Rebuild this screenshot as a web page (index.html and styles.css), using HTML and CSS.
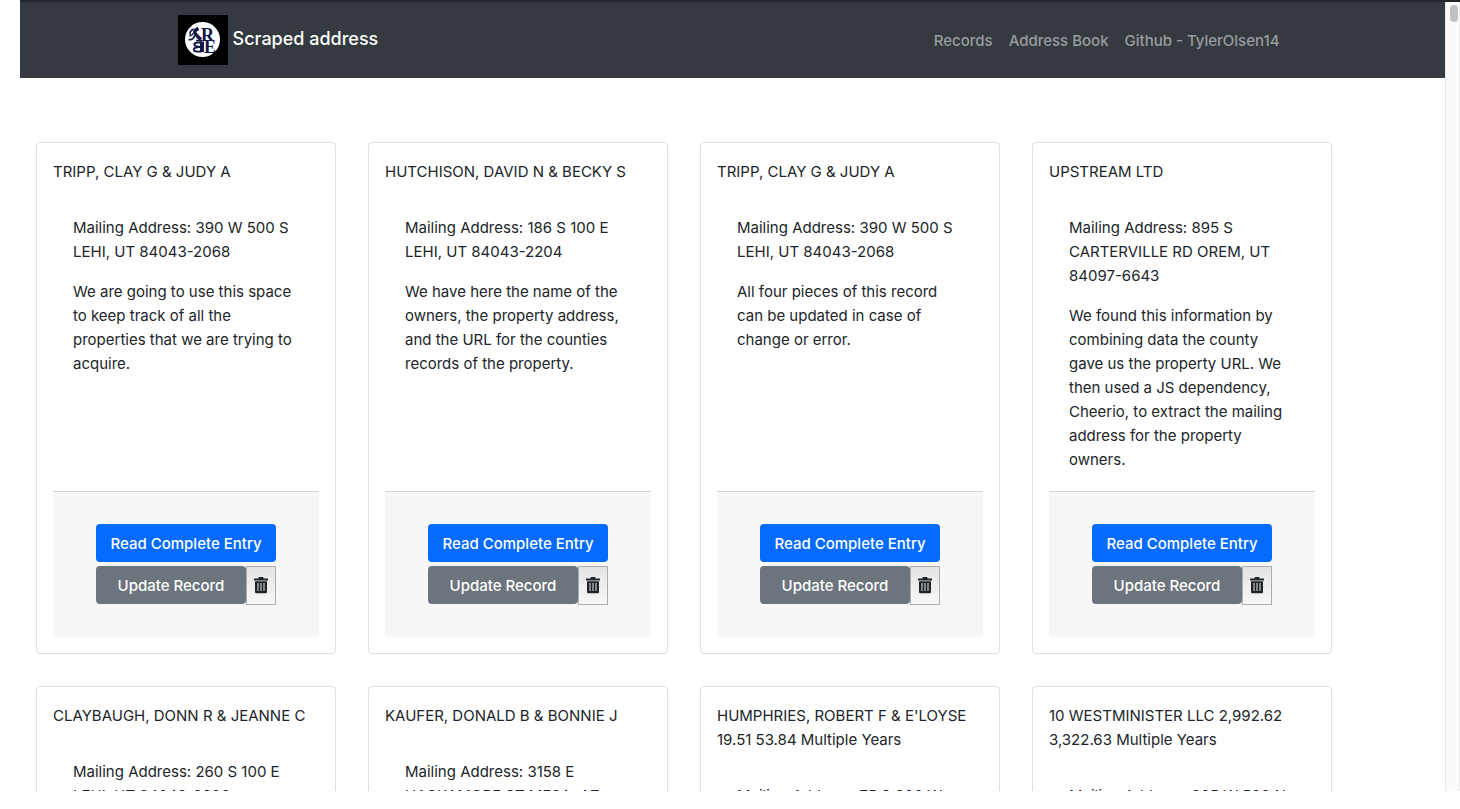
FILE: index.html
```
<!DOCTYPE html>
<html lang="en">
<head>
<meta charset="utf-8">
<title>Scraped address</title>
<link rel="stylesheet" href="styles.css">
</head>
<body>
<svg class="sprite" aria-hidden="true">
  <symbol id="trash" viewBox="0 0 14 17">
    <path fill="#212529" d="M0 1.5h4.500V.8Q4.500 0 5.300 0h3.400Q9.500 0 9.500.8v.7H14V3.500H0zM1 4.300h12V15q0 1.300-1.300 1.300H2.300Q1 16.300 1 15z"/>
    <path stroke="#a3a3a3" stroke-width="1.500" d="M4 6v8M7 6v8M10 6v8"/>
  </symbol>
</svg>
<div class="window">
  <div class="page">
    <header class="navbar">
      <div class="container">
        <a class="brand" href="#">
          <svg class="logo" viewBox="0 0 50 50" aria-hidden="true">
            <rect width="50" height="50" fill="#000"/>
            <circle cx="24.500" cy="24.500" r="17.500" fill="#fff"/>
            <g fill="none" stroke="#12164a">
              <path stroke-width="3.500" d="M20.500 13.500Q15 15.500 17.500 19T23 24.500"/>
              <path stroke-width="1.500" d="M15.500 14q-4 2-3.500 5.500M10.500 24.500q5 1 6-4M11.500 21q3-1 4-3M18 25.500h6"/>
              <path stroke-width="4" d="M24 26.500v10.500"/>
              <path stroke-width="2" d="M24 27.500h-4.500q-4 .5-3 2.500t6 2M22 32q-7 0-6 3.500 1 1.500 8 1"/>
            </g>
            <g class="monogram" fill="#12164a">
              <text x="23" y="25.500">R</text>
              <text x="26" y="38">E</text>
            </g>
          </svg>
          <span class="brand-name">Scraped address</span>
        </a>
        <nav class="links">
          <a href="#">Records</a>
          <a href="#">Address Book</a>
          <a href="#">Github - TylerOlsen14</a>
        </nav>
      </div>
    </header>
    <main class="cards">
      <article class="card">
        <h2 class="title">TRIPP, CLAY G &amp; JUDY A</h2>
        <div class="body"><p>Mailing Address: 390 W 500 S LEHI, UT 84043-2068</p><p>We are going to use this space to keep track of all the properties that we are trying to acquire.</p></div>
        <footer class="actions"><div class="buttons"><button class="btn read">Read Complete Entry</button><button class="btn update">Update Record</button><button class="delete" aria-label="Delete record"><svg class="trash"><use href="#trash"/></svg></button></div></footer>
      </article>
      <article class="card">
        <h2 class="title">HUTCHISON, DAVID N &amp; BECKY S</h2>
        <div class="body"><p>Mailing Address: 186 S 100 E LEHI, UT 84043-2204</p><p>We have here the name of the owners, the property address, and the URL for the counties records of the property.</p></div>
        <footer class="actions"><div class="buttons"><button class="btn read">Read Complete Entry</button><button class="btn update">Update Record</button><button class="delete" aria-label="Delete record"><svg class="trash"><use href="#trash"/></svg></button></div></footer>
      </article>
      <article class="card">
        <h2 class="title">TRIPP, CLAY G &amp; JUDY A</h2>
        <div class="body"><p>Mailing Address: 390 W 500 S LEHI, UT 84043-2068</p><p>All four pieces of this record can be updated in case of change or error.</p></div>
        <footer class="actions"><div class="buttons"><button class="btn read">Read Complete Entry</button><button class="btn update">Update Record</button><button class="delete" aria-label="Delete record"><svg class="trash"><use href="#trash"/></svg></button></div></footer>
      </article>
      <article class="card">
        <h2 class="title">UPSTREAM LTD</h2>
        <div class="body"><p>Mailing Address: 895 S CARTERVILLE RD OREM, UT 84097-6643</p><p>We found this information by combining data the county gave us the property URL. We then used a JS dependency, Cheerio, to extract the mailing address for the property owners.</p></div>
        <footer class="actions"><div class="buttons"><button class="btn read">Read Complete Entry</button><button class="btn update">Update Record</button><button class="delete" aria-label="Delete record"><svg class="trash"><use href="#trash"/></svg></button></div></footer>
      </article>
      <article class="card">
        <h2 class="title">CLAYBAUGH, DONN R &amp; JEANNE C</h2>
        <div class="body"><p>Mailing Address: 260 S 100 E LEHI, UT 84043-2206</p></div>
      </article>
      <article class="card">
        <h2 class="title">KAUFER, DONALD B &amp; BONNIE J</h2>
        <div class="body"><p>Mailing Address: 3158 E HACKAMORE ST MESA, AZ</p></div>
      </article>
      <article class="card">
        <h2 class="title">HUMPHRIES, ROBERT F &amp; E'LOYSE 19.51 53.84 Multiple Years</h2>
        <div class="body"><p>Mailing Address: 75 S 300 W</p></div>
      </article>
      <article class="card">
        <h2 class="title">10 WESTMINISTER LLC 2,992.62 3,322.63 Multiple Years</h2>
        <div class="body"><p>Mailing Address: 825 W 500 N</p></div>
      </article>
    </main>
  </div>
  <div class="scrollbar"><div class="thumb"></div></div>
</div>
</body>
</html>
```
FILE: styles.css
```
* { box-sizing: border-box; }
body {
  margin: 0;
  background: #fff;
  color: #212529;
  font-family: Inter, "Liberation Sans", sans-serif;
  font-size: 15px;
  line-height: 24px;
}
.sprite { display: none; }
.window {
  display: flex;
  height: calc(100vh - 18px);
  margin-left: 20px;
  overflow: hidden;
  border-top: 2px solid #25282b;
}
.page { flex: 1; min-width: 0; }
.navbar { background: #343a40; padding: 13px 0; }
.container {
  display: flex;
  align-items: center;
  justify-content: space-between;
  max-width: 1140px;
  margin: 0 auto;
  padding: 0 23px 0 15px;
}
.brand {
  display: flex;
  align-items: center;
  gap: 5px;
  color: #fff;
  text-decoration: none;
  font-size: 18px;
  font-weight: 500;
}
.brand-name { padding-bottom: 2px; }
.logo { width: 50px; height: 50px; }
.monogram { font: bold 18px "Liberation Serif", serif; }
.links { display: flex; gap: 16px; padding-top: 2px; font-weight: 500; }
.links a { color: #999c9f; text-decoration: none; }
.cards {
  display: grid;
  grid-template-columns: repeat(auto-fill, 300px);
  gap: 32px;
  padding: 64px 16px;
}
.card {
  display: flex;
  flex-direction: column;
  padding: 17px 16px 16px;
  border: 1px solid #dfdfdf;
  border-radius: 4px;
}
.title { margin: 0 0 12px; font-size: 15px; font-weight: 400; }
.body { flex: 1; padding: 20px 20px 19px; }
.body p { margin: 0 0 16px; }
.body p:last-child { margin: 0; }
.actions {
  display: flex;
  justify-content: center;
  padding: 32px 0;
  background: #f7f7f7;
  border-top: 1px solid #d5d6d7;
  border-radius: 0 0 4px 4px;
}
.buttons {
  display: grid;
  grid-template-columns: 150px 30px;
  row-gap: 4px;
}
.btn {
  height: 38px;
  padding: 2px 0 0;
  border: 0;
  border-radius: 4px;
  color: #fff;
  font: inherit;
  font-weight: 500;
}
.read { grid-column: 1 / 3; background: #056bff; }
.update { background: #6c757d; }
.delete {
  display: flex;
  align-items: center;
  justify-content: center;
  height: 39px;
  padding: 0;
  border: 1px solid #acacac;
  background: linear-gradient(#e4e4e4, #f7f7f7);
}
.trash { width: 14px; height: 17px; }
.scrollbar {
  width: 15px;
  padding: 3px 3px 0 4px;
  background: #fafafa;
  border-left: 1px solid #e7e7e7;
  border-right: 1px solid #ededed;
}
.thumb { width: 8px; height: 17px; border-radius: 4px; background: #c1c1c1; }
```
